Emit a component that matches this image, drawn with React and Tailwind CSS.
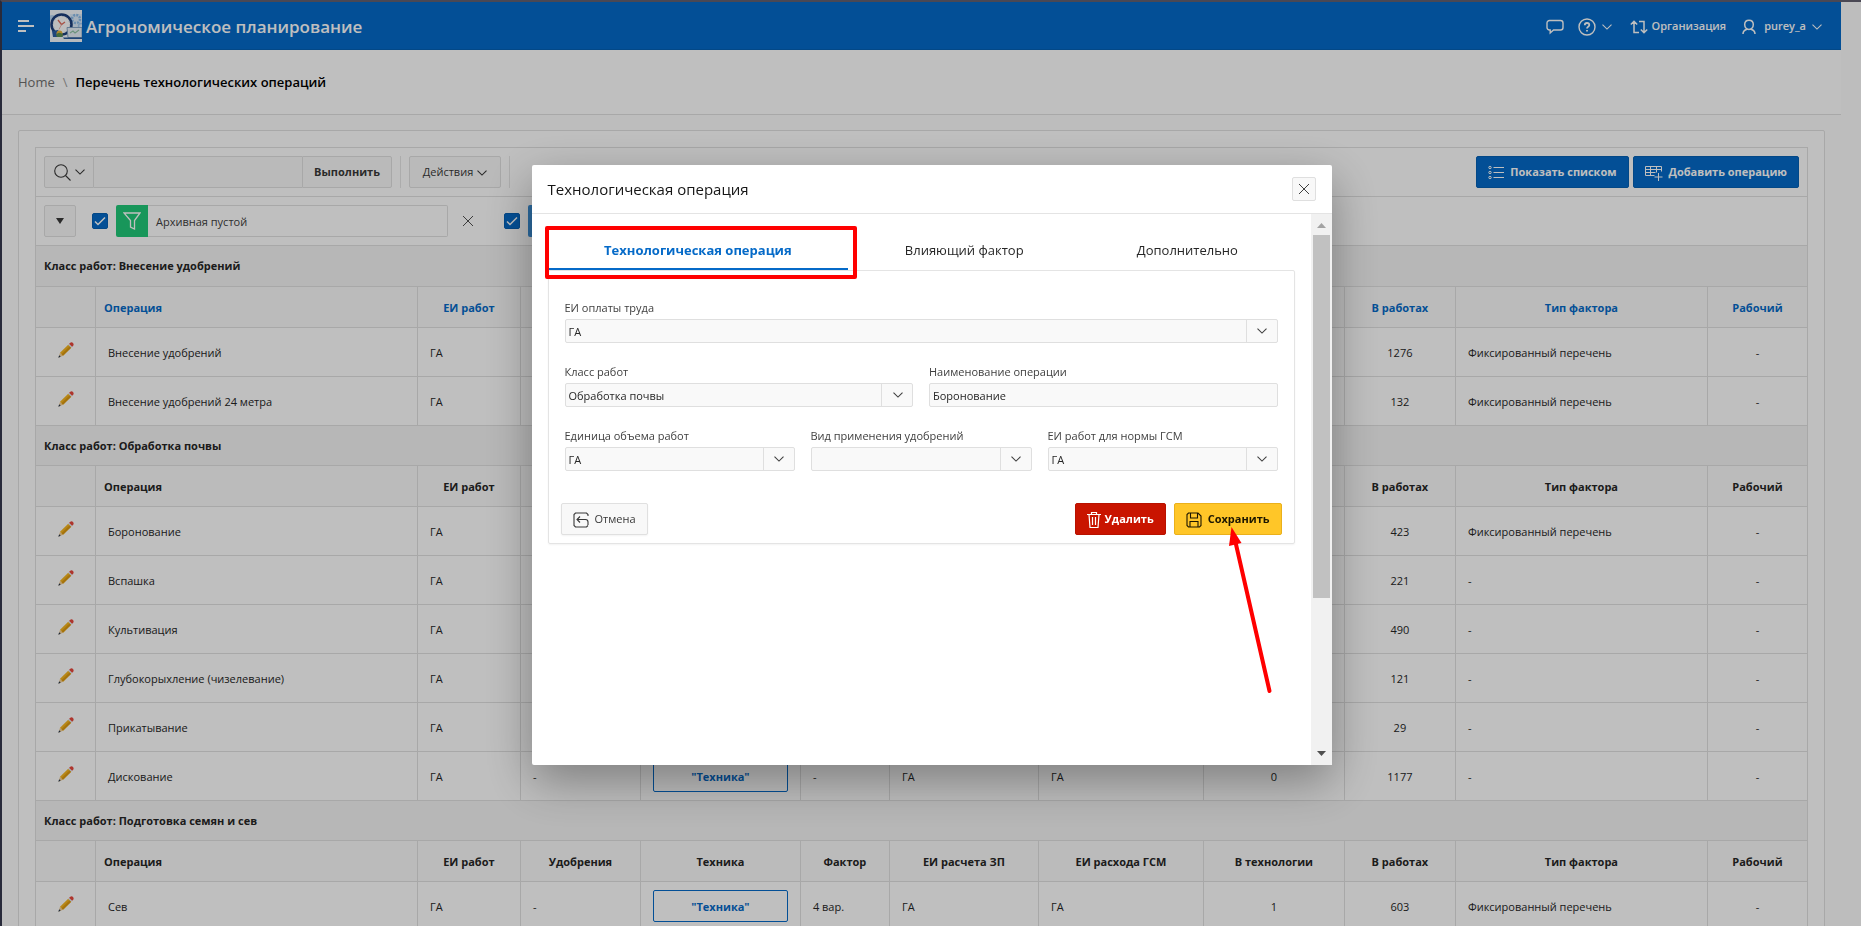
import { useState } from "react";

const BLUE_BUTTON =
  "flex h-8 items-center rounded-xs border border-[#0560b5] bg-[#056ac8] px-[11px] pt-px text-[11px] font-bold text-white hover:bg-[#0560b5]";
const GREY_BUTTON =
  "flex h-8 items-center rounded-xs border border-[#e0e0e0] bg-[#f8f8f8] text-[11px] text-[#383838] hover:bg-white";

const columns = [
  { key: "edit", title: "", width: "w-[60px]" },
  { key: "operation", title: "Операция", width: "" },
  { key: "unit", title: "ЕИ работ", width: "w-[103px]" },
  { key: "fertilizer", title: "Удобрения", width: "w-[120px]" },
  { key: "machinery", title: "Техника", width: "w-[160px]" },
  { key: "factor", title: "Фактор", width: "w-[89px]" },
  { key: "payUnit", title: "ЕИ расчета ЗП", width: "w-[149px]" },
  { key: "fuelUnit", title: "ЕИ расхода ГСМ", width: "w-[165px]" },
  { key: "inTech", title: "В технологии", width: "w-[141px]" },
  { key: "inWorks", title: "В работах", width: "w-[111px]" },
  { key: "factorType", title: "Тип фактора", width: "w-[252px]" },
  { key: "worker", title: "Рабочий", width: "w-[99px]" },
];

const groups = [
  {
    title: "Внесение удобрений",
    sortable: true,
    rows: [
      { operation: "Внесение удобрений", inTech: 1, inWorks: 1276, factorType: "Фиксированный перечень" },
      { operation: "Внесение удобрений 24 метра", inTech: 0, inWorks: 132, factorType: "Фиксированный перечень" },
    ],
  },
  {
    title: "Обработка почвы",
    rows: [
      { operation: "Боронование", inTech: 1, inWorks: 423, factorType: "Фиксированный перечень" },
      { operation: "Вспашка", inTech: 0, inWorks: 221, factorType: "-" },
      { operation: "Культивация", inTech: 0, inWorks: 490, factorType: "-" },
      { operation: "Глубокорыхление (чизелевание)", inTech: 0, inWorks: 121, factorType: "-" },
      { operation: "Прикатывание", inTech: 0, inWorks: 29, factorType: "-" },
      { operation: "Дискование", inTech: 0, inWorks: 1177, factorType: "-" },
    ],
  },
  {
    title: "Подготовка семян и сев",
    rows: [
      { operation: "Сев", factor: "4 вар.", inTech: 1, inWorks: 603, factorType: "Фиксированный перечень" },
    ],
  },
];

const Chevron = ({ className = "" }) => (
  <svg viewBox="0 0 10 6" className={`h-1.5 w-2.5 ${className}`} fill="none" stroke="currentColor" strokeWidth="1.1">
    <path d="M.5.7 5 5.1 9.5.7" />
  </svg>
);

const Cross = () => (
  <svg viewBox="0 0 12 12" className="size-3" fill="none" stroke="currentColor" strokeWidth="1">
    <path d="m1 1 10 10M11 1 1 11" />
  </svg>
);

const Pencil = () => (
  <svg viewBox="0 0 16 16" className="size-4">
    <path d="M2 10.800 5 13.800 .5 15.700z" fill="#f3cf96" />
    <path d="M1.200 13.300 2.700 14.800.3 15.800z" fill="#26374d" />
    <path d="M2 10.800 10.200 2.700l3 3L5 13.800z" fill="#f5b41f" />
    <path d="m3.500 12.300 8.200-8.100 1.500 1.500L5 13.800z" fill="#dd9a12" />
    <path d="m10.200 2.700.9-.9 3 3-.9.9z" fill="#dfe5ea" />
    <path d="M11.100 1.800 12 .900c1-.9 2.200-.8 3 0s.9 2 0 3l-.9.9z" fill="#e8473c" />
  </svg>
);

const AppLogo = () => (
  <svg viewBox="0 0 32 32" className="size-8">
    <rect width="32" height="32" fill="#f4f8fd" />
    <path d="M20 4h12v14H20z" fill="#dcebfa" />
    <circle cx="26" cy="9" r="4" fill="none" stroke="#8dbdea" strokeWidth="2.5" strokeDasharray="2 1.100" />
    <circle cx="31" cy="16" r="2.5" fill="none" stroke="#a5cbef" strokeWidth="1.5" />
    <circle cx="2" cy="8" r="3" fill="#b9d6f2" />
    <circle cx="11.500" cy="14.500" r="10" fill="#fdfdfd" stroke="#1d3f7c" strokeWidth="2.600" />
    <circle cx="11.500" cy="14.500" r="8" fill="none" stroke="#bccbe0" strokeWidth=".8" strokeDasharray="1 3.200" />
    <path d="m8 10 3.500 4.500 3.500-2.500" fill="none" stroke="#df6d5d" strokeWidth="1.300" />
    <path d="m11.500 14.500-2.500 5" stroke="#e6a69d" strokeWidth=".8" />
    <path d="m2 21 6-1 5 7H3z" fill="#2b5ca4" />
    <circle cx="9.500" cy="23.500" r="3" fill="#e8b43c" />
    <path d="M6 25c2-3 5-3 7 0l-1 2H7z" fill="#5b8f51" />
    <path d="M17 17.500h15v10H18z" fill="#e8f1f8" stroke="#7d9dbf" strokeWidth=".9" />
    <path d="m20 23 3-2 2 2 4-3" fill="none" stroke="#91c3a6" strokeWidth="1.100" />
    <path d="M13 27.500h19V29H14z" fill="#2c5c9d" />
  </svg>
);

const PageHeader = () => (
  <header className="flex h-12 items-center justify-between border-b border-[#0560b5] bg-[#056ac8] pr-[19px] pl-4 text-white">
    <div className="flex items-center">
      <button type="button" aria-label="Меню" className="mr-4">
        <svg viewBox="0 0 16 14" className="h-3.5 w-4" stroke="currentColor" strokeWidth="2">
          <path d="M0 2h11M0 7h16M0 12h8" />
        </svg>
      </button>
      <AppLogo />
      <a href="#home" className="ml-1 pt-0.5 text-[17px] leading-6 font-semibold">Агрономическое планирование</a>
    </div>
    <nav className="flex items-center pt-0.5 text-[11px] font-semibold">
      <button type="button" aria-label="Сообщения" className="mr-3.5">
        <svg viewBox="0 0 18 16" className="h-4 w-[18px]" fill="none" stroke="currentColor" strokeWidth="1.400">
          <path d="M3.500 1.500h11a2.500 2.500 0 0 1 2.500 2.500v4.500a2.500 2.500 0 0 1-2.500 2.500H7.500l-3.300 3V11h-.7A2.500 2.500 0 0 1 1 8.500V4a2.500 2.500 0 0 1 2.500-2.500z" />
        </svg>
      </button>
      <button type="button" aria-label="Помощь" className="mr-[18px] flex items-center">
        <svg viewBox="0 0 18 18" className="mr-1.5 size-[18px]" fill="none" stroke="currentColor" strokeWidth="1.400">
          <circle cx="9" cy="9" r="8" />
          <path d="M6.800 7.200C6.800 5.700 7.700 5 9 5s2.300.8 2.300 2C11.300 8.600 9 8.700 9 10.600M9 12v1.600" strokeWidth="1.800" />
        </svg>
        <Chevron />
      </button>
      <button type="button" className="mr-4 flex items-center">
        <svg viewBox="0 0 18 16" className="mr-1 h-4 w-[18px]" fill="none" stroke="currentColor" strokeWidth="1.500">
          <path d="M.8 5.500 4 2.300l3.200 3.200M4 2.700V13.500h5M17.200 10.500 14 13.700l-3.200-3.200M14 13.300V2.500H9" />
        </svg>
        Организация
      </button>
      <button type="button" className="flex items-center">
        <svg viewBox="0 0 14 16" className="mr-2 h-4 w-3.5" fill="none" stroke="currentColor" strokeWidth="1.500">
          <path d="M7 1.200c2.600 0 4.300 1.600 4.300 4.400S9.500 10.400 7 10.400 2.700 8.400 2.700 5.600 4.400 1.200 7 1.200zM1 15c0-2.500 1.300-4 4-4.800M13 15c0-2.500-1.300-4-4-4.800" />
        </svg>
        purey_a
        <Chevron className="ml-1.5" />
      </button>
    </nav>
  </header>
);

const SearchToolbar = () => (
  <div className="flex h-[49px] items-center border-b border-[#e0e0e0] px-2">
    <button type="button" aria-label="Выбрать столбцы" className={`${GREY_BUTTON} w-[50px] justify-center gap-1 rounded-r-none`}>
      <svg viewBox="0 0 17 17" className="size-[17px]" fill="none" stroke="currentColor" strokeWidth="1.100">
        <circle cx="7" cy="7" r="6.300" />
        <path d="m11.500 11.500 5 5" />
      </svg>
      <Chevron />
    </button>
    <input aria-label="Поиск" className="h-8 w-[208px] border-y border-[#e0e0e0] bg-[#f9f9f9] px-2 text-[11px] outline-none" />
    <button type="button" className={`${GREY_BUTTON} w-[90px] justify-center rounded-l-none pt-px font-bold`}>Выполнить</button>
    <div className="mx-2 h-8 w-px bg-[#e6e6e6]" />
    <button type="button" className={`${GREY_BUTTON} w-[92px] justify-center gap-1 pt-px`}>
      Действия
      <Chevron />
    </button>
    <div className="mx-2 h-8 w-px bg-[#e6e6e6]" />
    <button type="button" className={`${BLUE_BUTTON} mr-1 ml-auto`}>
      <svg viewBox="0 0 16 16" className="mr-1.5 size-4" fill="none" stroke="currentColor" strokeWidth="1">
        <path d="M5.500 2.500H16M5.500 7.500H16M5.500 12.500H16" />
        <circle cx="2" cy="2.500" r="1.200" />
        <circle cx="2" cy="7.500" r="1.200" />
        <circle cx="2" cy="12.500" r="1.200" />
      </svg>
      Показать списком
    </button>
    <button type="button" className={BLUE_BUTTON}>
      <svg viewBox="0 0 18 16" className="mr-1.5 h-4 w-[18px]" fill="none" stroke="currentColor" strokeWidth="1">
        <path d="M9.500 10.500H.5v-9h16v5M.5 4.500h16M.5 7.500h10M5.500 1.500v9M11.500 1.500v6M13.500 8v8M9.500 12h8" />
      </svg>
      Добавить операцию
    </button>
  </div>
);

const FilterCheckbox = ({ label }) => {
  const [checked, setChecked] = useState(true);
  return (
    <span className="relative size-4">
      <input
        type="checkbox"
        aria-label={label}
        checked={checked}
        onChange={() => setChecked(!checked)}
        className="block size-4 appearance-none rounded-xs border border-[#0560b5] bg-white checked:bg-[#056ac8]"
      />
      {checked && (
        <svg viewBox="0 0 16 16" className="pointer-events-none absolute inset-0" fill="none" stroke="#fff" strokeWidth="1.500">
          <path d="m3 8.500 3 3L13 4.500" />
        </svg>
      )}
    </span>
  );
};

const FilterRow = () => (
  <div className="flex h-[49px] items-center border-b border-[#e0e0e0] px-2">
    <button type="button" aria-label="Свернуть фильтры" className={`${GREY_BUTTON} mr-4 w-8 justify-center`}>
      <svg viewBox="0 0 8 6" className="h-1.5 w-2" fill="currentColor">
        <path d="M0 0h8L4 6z" />
      </svg>
    </button>
    <FilterCheckbox label="Включить фильтр: Архивная пустой" />
    <span className="ml-2 grid size-8 place-items-center rounded-l-xs bg-[#21c978] text-white">
      <svg viewBox="0 0 18 18" className="size-[18px]" fill="none" stroke="currentColor" strokeWidth="1.300">
        <path d="M1 1h16l-5.500 7.500V17L7.500 15V8.500z" />
      </svg>
    </span>
    <button type="button" className="h-8 w-[300px] rounded-r-xs border border-l-0 border-[#e0e0e0] px-2 pt-0.5 text-left text-[11px] text-[#404040]">
      Архивная пустой
    </button>
    <button type="button" aria-label="Удалить фильтр" className="mr-[30px] ml-3.5 text-[#505050]">
      <Cross />
    </button>
    <FilterCheckbox label="Включить выделение" />
    <span className="ml-2 size-8 rounded-l-xs bg-[#3b8fd6]" />
  </div>
);

const HEAD_CELL = "h-[41px] border-r border-b border-[#e0e0e0] bg-[#fafafa] px-2 pt-0.5 font-bold last:border-r-0";
const CELL = "h-[49px] border-r border-b border-[#e0e0e0] px-3 pt-0.5 last:border-r-0";

const OperationRow = ({ row }) => (
  <tr>
    <td className={CELL}>
      <a href="#edit" aria-label="Редактировать" className="flex justify-center pb-1.5">
        <Pencil />
      </a>
    </td>
    <td className={CELL}>{row.operation}</td>
    <td className={CELL}>ГА</td>
    <td className={CELL}>-</td>
    <td className="h-[49px] border-r border-b border-[#e0e0e0] px-3">
      <button type="button" className="block h-8 w-full rounded-xs border border-[#056ac8] pt-px font-bold text-[#056ac8]">
        "Техника"
      </button>
    </td>
    <td className={CELL}>{row.factor || "-"}</td>
    <td className={CELL}>ГА</td>
    <td className={CELL}>ГА</td>
    <td className={`${CELL} text-center`}>{row.inTech}</td>
    <td className={`${CELL} text-center`}>{row.inWorks}</td>
    <td className={CELL}>{row.factorType}</td>
    <td className={`${CELL} text-center`}>-</td>
  </tr>
);

const OperationsTable = () => (
  <table className="w-full table-fixed border-separate border-spacing-0 text-[11px] leading-4 text-[#262626]">
    <colgroup>
      {columns.map(col => (
        <col key={col.key} className={col.width} />
      ))}
    </colgroup>
    {groups.map(group => (
      <tbody key={group.title} className="group">
        <tr>
          <th colSpan={12} scope="rowgroup" className="h-10 border-b border-[#e0e0e0] bg-[#f5f5f5] px-2 text-left font-bold group-first-of-type:h-[41px]">
            Класс работ: {group.title}
          </th>
        </tr>
        <tr className={group.sortable ? "text-[#056ac8]" : ""}>
          {columns.map(col => (
            <th key={col.key} scope="col" className={`${HEAD_CELL} ${col.key === "operation" ? "text-left" : "text-center"}`}>
              {group.sortable && col.title ? <a href="#sort">{col.title}</a> : col.title}
            </th>
          ))}
        </tr>
        {group.rows.map(row => (
          <OperationRow key={row.operation} row={row} />
        ))}
      </tbody>
    ))}
  </table>
);

const SelectField = ({ id, label, options }) => (
  <div>
    <label htmlFor={id} className="block text-[11px] leading-[22px]">{label}</label>
    <div className="relative h-6">
      <select id={id} className="block h-6 w-full appearance-none rounded-xs border border-[#dfdfdf] bg-[#f9f9f9] pt-0.5 pr-9 pl-[3px] text-[11px] text-[#262626]">
        {options.map(option => (
          <option key={option}>{option}</option>
        ))}
      </select>
      <span className="pointer-events-none absolute inset-y-0 right-0 grid w-8 place-items-center border-l border-[#dfdfdf] text-[#404040]">
        <Chevron />
      </span>
    </div>
  </div>
);

const TABS = ["Технологическая операция", "Влияющий фактор", "Дополнительно"];

const DialogTabs = () => {
  const [active, setActive] = useState(TABS[0]);
  return (
    <div role="tablist" className="flex h-10">
      {TABS.map(tab => (
        <button
          key={tab}
          type="button"
          role="tab"
          aria-selected={tab === active}
          onClick={() => setActive(tab)}
          className={`flex-auto border-b-2 pt-1 text-[13px] ${
            tab === active ? "border-[#056ac8] font-bold text-[#056ac8]" : "border-transparent text-[#262626]"
          }`}
        >
          {tab}
        </button>
      ))}
    </div>
  );
};

const OperationForm = () => (
  <form className="rounded-xs border border-[#e4e4e4] text-[#404040] shadow-xs" onSubmit={e => e.preventDefault()}>
    <div className="grid gap-[18px] px-4 pt-[26px]">
      <SelectField id="pay-unit" label="ЕИ оплаты труда" options={["ГА"]} />
      <div className="grid grid-cols-2 gap-4">
        <SelectField id="work-class" label="Класс работ" options={["Обработка почвы"]} />
        <div>
          <label htmlFor="operation-name" className="block text-[11px] leading-[22px]">Наименование операции</label>
          <input
            id="operation-name"
            defaultValue="Боронование"
            className="block h-6 w-full rounded-xs border border-[#dfdfdf] bg-[#f9f9f9] px-[3px] pt-px text-[11px] text-[#262626]"
          />
        </div>
      </div>
      <div className="grid grid-cols-[230fr_221fr_230fr] gap-4">
        <SelectField id="volume-unit" label="Единица объема работ" options={["ГА"]} />
        <SelectField id="fertilizer-kind" label="Вид применения удобрений" options={[""]} />
        <SelectField id="fuel-unit" label="ЕИ работ для нормы ГСМ" options={["ГА"]} />
      </div>
    </div>
    <div className="mt-8 flex gap-2 px-3 pb-2">
      <button type="button" className={`${GREY_BUTTON} mr-auto px-[11px] pt-px shadow-xs`}>
        <svg viewBox="0 0 16 16" className="mr-1.5 size-4" fill="none" stroke="currentColor" strokeWidth="1.100">
          <path d="M15 4V2.500L13.500 1h-11L1 2.500v11L2.500 15h11l1.500-1.500M7 4.500l-3 3 3 3M4 7.500h8.500c1.700 0 2.500 1 2.500 2.500v3" />
        </svg>
        Отмена
      </button>
      <button type="button" className="flex h-8 items-center rounded-xs border border-[#b81200] bg-[#c91400] px-[11px] pt-px text-[11px] font-bold text-white">
        <svg viewBox="1 0 14 16" className="mr-1 h-4 w-3.5" fill="none" stroke="currentColor" strokeWidth="1.200">
          <path d="M1 2.500h14M5.500 2.500v-2h5v2M3 2.500l1 13h8l1-13M6.500 5v8M9.500 5v8" />
        </svg>
        Удалить
      </button>
      <button type="submit" className="flex h-8 items-center rounded-xs border border-[#eab01b] bg-[#ffc628] px-[11px] pt-px text-[11px] font-bold text-[#1c1600]">
        <svg viewBox="0 0 16 16" className="mr-1.5 size-4" fill="none" stroke="currentColor" strokeWidth="1.100">
          <path d="M2.500 1H12l3 3v9.500L13.500 15h-11L1 13.500v-11zM4.500 1v5h7V1M4 15V9.500h8V15" />
        </svg>
        Сохранить
      </button>
    </div>
  </form>
);

const DialogScrollbar = () => (
  <div className="flex w-[21px] flex-col items-center justify-between bg-[#f1f1f1]" aria-hidden="true">
    <svg viewBox="0 0 21 21" className="size-[21px] shrink-0">
      <path d="M6 14h9l-4.500-5z" fill="#a3a3a3" />
    </svg>
    <div className="mb-auto h-[363px] w-[17px] bg-[#c1c1c1]" />
    <svg viewBox="0 0 21 21" className="size-[21px] shrink-0">
      <path d="M6 7h9l-4.500 5z" fill="#505050" />
    </svg>
  </div>
);

const OperationDialog = () => (
  <div role="dialog" aria-label="Технологическая операция" className="relative flex h-[600px] w-[800px] flex-col rounded-xs bg-white shadow-[0_16px_48px_rgba(0,0,0,0.35)]">
    <div className="flex h-[49px] shrink-0 items-center justify-between border-b border-[#e4e4e4] px-4">
      <h2 className="pt-px text-[15px] font-medium text-[#161616]">Технологическая операция</h2>
      <button type="button" aria-label="Закрыть" className="grid size-6 place-items-center rounded-xs border border-[#dfdfdf] bg-[#f8f8f8] text-[#404040]">
        <Cross />
      </button>
    </div>
    <div className="flex min-h-0 flex-1">
      <div className="flex-1 px-4 pt-4">
        <DialogTabs />
        <OperationForm />
      </div>
      <DialogScrollbar />
    </div>

    {/* highlight around the current tab and pointer to the save button */}
    <div className="pointer-events-none absolute top-[61px] left-[13px] h-[53px] w-[312px] rounded-xs border-4 border-[#ff0000]" />
    <svg viewBox="0 0 50 170" className="pointer-events-none absolute top-[361px] left-[692px] h-[170px] w-[50px]">
      <path d="M11 14 45.500 165" stroke="#ff0000" strokeWidth="4" strokeLinecap="round" />
      <path d="M7.500 1 17.500 17 5 20z" fill="#ff0000" />
    </svg>
  </div>
);

const App = () => (
  <div className="h-screen overflow-hidden border-t-2 border-l-2 border-t-[#4a4854] border-l-[#282a3a] bg-[#fcfcfc] pr-5 font-['Open_Sans','Noto_Sans',sans-serif]">
    <PageHeader />
    <nav aria-label="Навигация" className="flex h-[65px] items-center border-b border-[#e0e0e0] bg-white px-4 pt-0.5 text-[13px]">
      <a href="#home" className="text-[#707070]">Home</a>
      <span className="mx-2 text-[#a0a0a0]">\</span>
      <span className="font-semibold text-black">Перечень технологических операций</span>
    </nav>
    <main className="mx-4 mt-[15px] rounded-xs border border-[#e0e0e0] bg-white p-4">
      <div className="border border-[#e0e0e0]">
        <SearchToolbar />
        <FilterRow />
        <OperationsTable />
      </div>
    </main>

    <div className="fixed top-0.5 right-0 bottom-0 left-0.5 grid place-items-center bg-black/25 pt-0.5">
      <OperationDialog />
    </div>
  </div>
);

export default App;
